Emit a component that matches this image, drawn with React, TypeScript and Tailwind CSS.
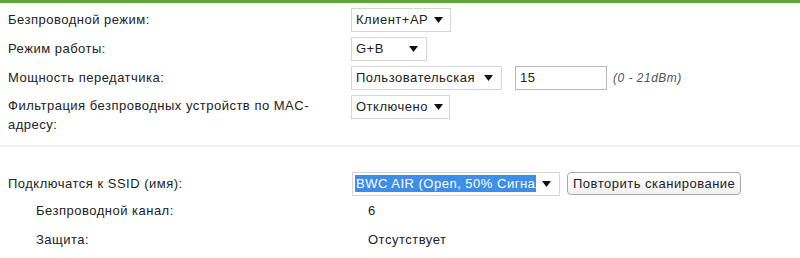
import React from "react";

const Arrow = () => (
  <svg width="9" height="6" viewBox="0 0 9 6" className="shrink-0">
    <path d="M0 0h9L4.5 6z" fill="#111" />
  </svg>
);

const Select = ({
  value,
  width,
  highlight,
}: {
  value: string;
  width: string;
  highlight?: boolean;
}) => (
  <div
    className={`flex items-center h-[24px] border border-[#d6d6d6] bg-white pl-[4px] pr-[8px] gap-[6px] ${width}`}
  >
    {highlight ? (
      <span className="flex-1 min-w-0 overflow-hidden whitespace-nowrap bg-[#3d8ee8] text-white leading-[17px] -ml-[2px] pl-[1px]">
        {value}
      </span>
    ) : (
      <span className="flex-1 whitespace-nowrap">{value}</span>
    )}
    <Arrow />
  </div>
);

export default function App() {
  return (
    <div className="w-[800px] h-[258px] bg-white overflow-hidden font-['Liberation_Sans',Arial,sans-serif] text-[13px] text-[#222] tracking-[0.5px]">
      <div className="h-[3px] bg-[#5aa83a]" />
      <div className="pt-[5px] flex flex-col gap-[5px]">
        <div className="flex items-center h-[24px]">
          <div className="w-[351px] pl-[8px]">Безпроводной режим:</div>
          <Select value="Клиент+AP" width="w-[100px]" />
        </div>
        <div className="flex items-center h-[24px]">
          <div className="w-[351px] pl-[8px]">Режим работы:</div>
          <Select value="G+B" width="w-[76px]" />
        </div>
        <div className="flex items-center h-[24px]">
          <div className="w-[351px] pl-[8px]">Мощность передатчика:</div>
          <Select value="Пользовательская" width="w-[151px]" />
          <div className="ml-[13px] w-[92px] h-[24px] border border-[#b8b8b8] flex items-center pl-[4px]">
            15
          </div>
          <span className="ml-[6px] italic text-[#555] text-[12px]">(0 - 21dBm)</span>
        </div>
        <div className="flex items-start">
          <div className="w-[351px] pl-[8px] pt-[1px] leading-[19px] pr-[30px]">
            Фильтрация безпроводных устройств по MAC-адресу:
          </div>
          <Select value="Отключено" width="w-[99px]" />
        </div>
      </div>
      <div className="mt-[11px] h-[2px] bg-[#ececec] border-b border-[#f6f6f6]" />
      <div className="pt-[25px] flex flex-col">
        <div className="flex items-center h-[23px]">
          <div className="w-[352px] pl-[8px]">Подключатся к SSID (имя):</div>
          <Select value="BWC AIR (Open, 50% Сигнал)" width="w-[208px]" highlight />
          <button className="ml-[7px] h-[23px] px-[5px] rounded-[4px] border border-[#a8a8a8] bg-gradient-to-b from-white to-[#f0f0f0] text-[13px] tracking-[0.5px]">
            Повторить сканирование
          </button>
        </div>
        <div className="flex items-center h-[28px] mt-[2px]">
          <div className="w-[368px] pl-[36px]">Безпроводной канал:</div>
          <div>6</div>
        </div>
        <div className="flex items-center h-[28px] mt-[1px]">
          <div className="w-[368px] pl-[36px]">Защита:</div>
          <div>Отсутствует</div>
        </div>
      </div>
    </div>
  );
}
